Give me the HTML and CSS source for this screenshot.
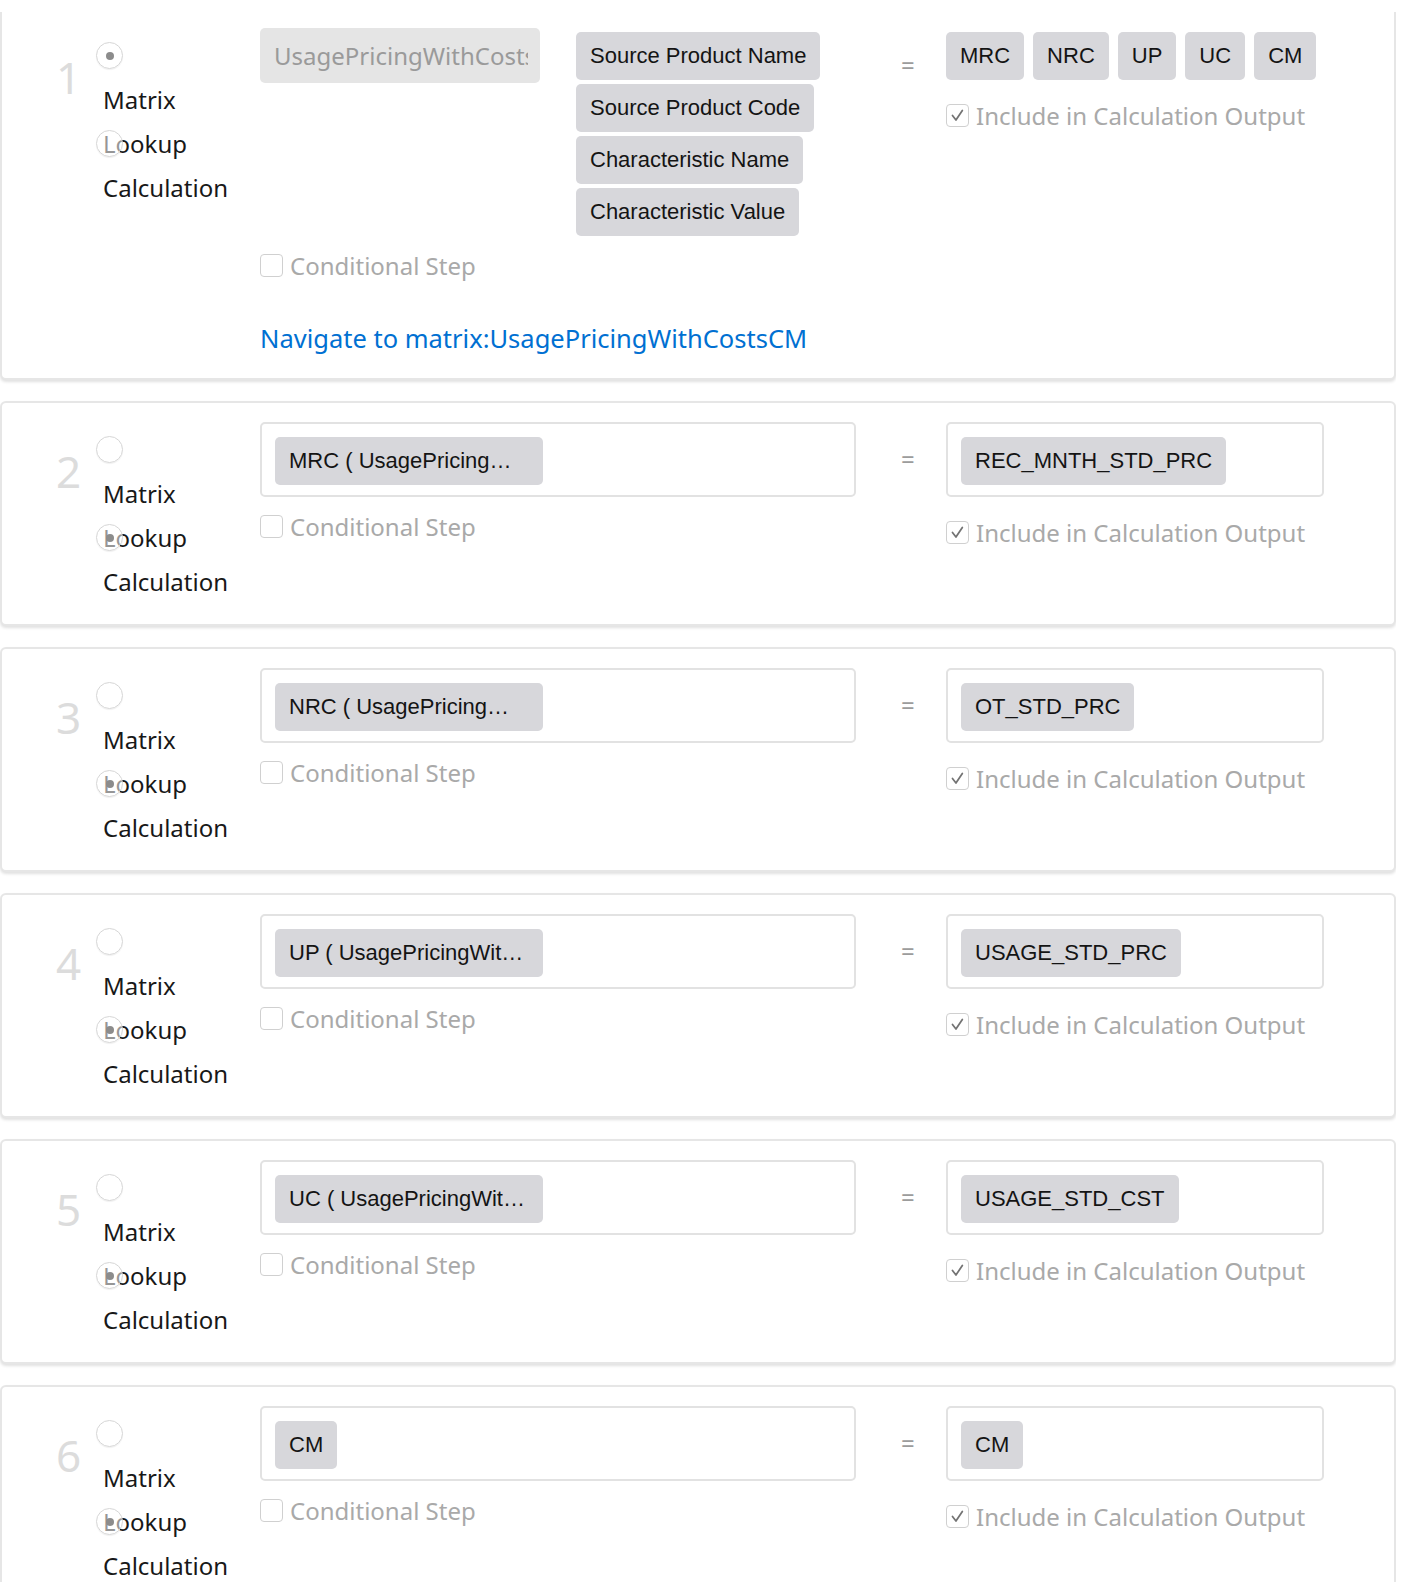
FILE: index.html
```html
<!DOCTYPE html>
<html lang="en">
  <head>
    <meta charset="UTF-8" />
    <meta name="viewport" content="width=device-width, initial-scale=1.0" />
    <title>Calculation Procedure Steps</title>
    <link rel="stylesheet" href="styles.css">
  </head>
  <body>
    <div class="step-list">
      <!-- Step 1: matrix lookup -->
      <div class="step-card step-card--first">
        <div class="step-num">1</div>
        <div class="step-type">
          <span class="radio radio--on"></span>
          <div class="type-opt">Matrix</div>
          <div class="type-opt type-opt--over"><span class="radio"></span>Lookup</div>
          <div class="type-opt">Calculation</div>
        </div>
        <div class="step-input">
          <div class="matrix-row">
            <input class="matrix-name" type="text" value="UsagePricingWithCostsCM" disabled>
            <div class="chip-stack">
              <span class="chip">Source Product Name</span>
              <span class="chip">Source Product Code</span>
              <span class="chip">Characteristic Name</span>
              <span class="chip">Characteristic Value</span>
            </div>
          </div>
          <label class="check"><span class="check-box"></span>Conditional Step</label>
          <a class="matrix-link" href="#">Navigate to matrix:UsagePricingWithCostsCM</a>
        </div>
        <div class="step-eq">=</div>
        <div class="step-output">
          <div class="chip-row">
            <span class="chip">MRC</span>
            <span class="chip">NRC</span>
            <span class="chip">UP</span>
            <span class="chip">UC</span>
            <span class="chip">CM</span>
          </div>
          <label class="check"><span class="check-box check-box--on"><svg viewBox="0 0 23 23"><polyline points="6,11.5 9.8,16.5 16.8,6" /></svg></span>Include in Calculation Output</label>
        </div>
      </div>

      <div class="step-card">
        <div class="step-num">2</div>
        <div class="step-type">
          <span class="radio"></span>
          <div class="type-opt">Matrix</div>
          <div class="type-opt type-opt--over"><span class="radio radio--on"></span>Lookup</div>
          <div class="type-opt">Calculation</div>
        </div>
        <div class="step-input">
          <div class="pill-box"><span class="chip chip--wide">MRC ( UsagePricing…</span></div>
          <label class="check"><span class="check-box"></span>Conditional Step</label>
        </div>
        <div class="step-eq">=</div>
        <div class="step-output">
          <div class="pill-box"><span class="chip">REC_MNTH_STD_PRC</span></div>
          <label class="check"><span class="check-box check-box--on"><svg viewBox="0 0 23 23"><polyline points="6,11.5 9.8,16.5 16.8,6" /></svg></span>Include in Calculation Output</label>
        </div>
      </div>

      <div class="step-card">
        <div class="step-num">3</div>
        <div class="step-type">
          <span class="radio"></span>
          <div class="type-opt">Matrix</div>
          <div class="type-opt type-opt--over"><span class="radio radio--on"></span>Lookup</div>
          <div class="type-opt">Calculation</div>
        </div>
        <div class="step-input">
          <div class="pill-box"><span class="chip chip--wide">NRC ( UsagePricing…</span></div>
          <label class="check"><span class="check-box"></span>Conditional Step</label>
        </div>
        <div class="step-eq">=</div>
        <div class="step-output">
          <div class="pill-box"><span class="chip">OT_STD_PRC</span></div>
          <label class="check"><span class="check-box check-box--on"><svg viewBox="0 0 23 23"><polyline points="6,11.5 9.8,16.5 16.8,6" /></svg></span>Include in Calculation Output</label>
        </div>
      </div>

      <div class="step-card">
        <div class="step-num">4</div>
        <div class="step-type">
          <span class="radio"></span>
          <div class="type-opt">Matrix</div>
          <div class="type-opt type-opt--over"><span class="radio radio--on"></span>Lookup</div>
          <div class="type-opt">Calculation</div>
        </div>
        <div class="step-input">
          <div class="pill-box"><span class="chip chip--wide">UP ( UsagePricingWit…</span></div>
          <label class="check"><span class="check-box"></span>Conditional Step</label>
        </div>
        <div class="step-eq">=</div>
        <div class="step-output">
          <div class="pill-box"><span class="chip">USAGE_STD_PRC</span></div>
          <label class="check"><span class="check-box check-box--on"><svg viewBox="0 0 23 23"><polyline points="6,11.5 9.8,16.5 16.8,6" /></svg></span>Include in Calculation Output</label>
        </div>
      </div>

      <div class="step-card">
        <div class="step-num">5</div>
        <div class="step-type">
          <span class="radio"></span>
          <div class="type-opt">Matrix</div>
          <div class="type-opt type-opt--over"><span class="radio radio--on"></span>Lookup</div>
          <div class="type-opt">Calculation</div>
        </div>
        <div class="step-input">
          <div class="pill-box"><span class="chip chip--wide">UC ( UsagePricingWit…</span></div>
          <label class="check"><span class="check-box"></span>Conditional Step</label>
        </div>
        <div class="step-eq">=</div>
        <div class="step-output">
          <div class="pill-box"><span class="chip">USAGE_STD_CST</span></div>
          <label class="check"><span class="check-box check-box--on"><svg viewBox="0 0 23 23"><polyline points="6,11.5 9.8,16.5 16.8,6" /></svg></span>Include in Calculation Output</label>
        </div>
      </div>

      <div class="step-card">
        <div class="step-num">6</div>
        <div class="step-type">
          <span class="radio"></span>
          <div class="type-opt">Matrix</div>
          <div class="type-opt type-opt--over"><span class="radio radio--on"></span>Lookup</div>
          <div class="type-opt">Calculation</div>
        </div>
        <div class="step-input">
          <div class="pill-box"><span class="chip">CM</span></div>
          <label class="check"><span class="check-box"></span>Conditional Step</label>
        </div>
        <div class="step-eq">=</div>
        <div class="step-output">
          <div class="pill-box"><span class="chip">CM</span></div>
          <label class="check"><span class="check-box check-box--on"><svg viewBox="0 0 23 23"><polyline points="6,11.5 9.8,16.5 16.8,6" /></svg></span>Include in Calculation Output</label>
        </div>
      </div>
    </div>
  </body>
</html>
```

FILE: styles.css
```css
body {
  margin: 0;
  font-family: "Noto Sans", "Open Sans", sans-serif;
  background: #fff;
  color: #181818;
}

.step-list {
  width: 1396px;
  margin-top: 12px;
  overflow: hidden;
}

.step-card {
  display: flex;
  align-items: flex-start;
  background: #fff;
  border: 2px solid #e6e6e6;
  border-radius: 6px;
  box-shadow: 0 2px 3px rgba(0, 0, 0, 0.12);
  padding: 19px 0 20px 54px;
  margin-bottom: 21px;
}

.step-card--first {
  margin-top: -5px;
}

.step-num {
  width: 40px;
  flex-shrink: 0;
  margin-top: 27px;
  font-size: 44px;
  line-height: 44px;
  color: #dcdcdc;
}

/* step type: radios + labels */
.step-type {
  width: 164px;
  flex-shrink: 0;
  margin-top: 14px;
}

.radio {
  display: block;
  position: relative;
  width: 27px;
  height: 27px;
  box-sizing: border-box;
  border: 1px solid #d6d6d6;
  border-radius: 50%;
  background: rgba(255, 255, 255, 0.55);
  box-shadow: 0 1px 1px rgba(0, 0, 0, 0.06);
  margin-bottom: 9px;
}

.radio--on::after {
  content: "";
  position: absolute;
  left: 8.5px;
  top: 8.5px;
  width: 8px;
  height: 8px;
  border-radius: 50%;
  background: #8c8c8c;
}

.type-opt {
  padding-left: 7px;
  font-size: 24px;
  line-height: 44px;
}

.type-opt--over {
  position: relative;
}

.type-opt--over .radio {
  position: absolute;
  left: 0;
  top: 8px;
  margin: 0;
  z-index: 1;
}

/* source side */
.step-input {
  width: 596px;
  flex-shrink: 0;
}

.matrix-row {
  display: flex;
  align-items: flex-start;
  gap: 36px;
}

.matrix-name {
  display: block;
  width: 280px;
  height: 55px;
  box-sizing: border-box;
  margin: 0;
  padding: 0 12px 0 14px;
  border: none;
  border-radius: 5px;
  background: #e5e5e5;
  font-family: "Noto Sans", "Open Sans", sans-serif;
  font-size: 24px;
  color: #9a9a9a;
}

.chip-stack {
  display: flex;
  flex-direction: column;
  align-items: flex-start;
}

.chip {
  display: block;
  height: 48px;
  box-sizing: border-box;
  margin-top: 4px;
  padding: 0 14px;
  border-radius: 5px;
  background: #d7d7db;
  font-family: "Liberation Sans", Arial, sans-serif;
  font-size: 22px;
  line-height: 48px;
  color: #141414;
  white-space: nowrap;
}

.chip--wide {
  width: 268px;
}

.pill-box {
  display: flex;
  height: 75px;
  box-sizing: border-box;
  border: 2px solid #e2e2e2;
  border-radius: 5px;
  padding: 9px 13px 10px;
}

.check {
  display: flex;
  align-items: center;
  gap: 7px;
  height: 34px;
  margin-top: 12px;
  font-size: 24px;
  color: #a9a9a9;
}

.check-box {
  width: 23px;
  height: 23px;
  box-sizing: border-box;
  border: 1px solid #d0d0d0;
  border-radius: 4px;
  background: #fff;
}

.check-box svg {
  display: block;
  width: 21px;
  height: 21px;
}

.check-box polyline {
  fill: none;
  stroke: #737373;
  stroke-width: 1.9;
  stroke-linecap: round;
  stroke-linejoin: round;
}

.matrix-link {
  display: block;
  margin-top: 36px;
  font-size: 25.5px;
  line-height: 40px;
  color: #0070d2;
  text-decoration: none;
}

.step-eq {
  width: 90px;
  flex-shrink: 0;
  box-sizing: border-box;
  padding-left: 45px;
  margin-top: 20px;
  font-size: 24px;
  line-height: 34px;
  color: #9c9c9c;
}

/* target side */
.step-output {
  width: 378px;
  flex-shrink: 0;
}

.chip-row {
  display: flex;
  gap: 9px;
}

.step-output .check {
  margin-top: 18px;
}
```
